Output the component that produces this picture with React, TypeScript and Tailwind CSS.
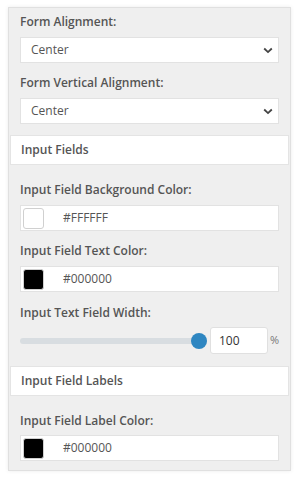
import React from 'react';

const font = { fontFamily: '"Open Sans", "Liberation Sans", sans-serif' };

function Label({ children }: { children: React.ReactNode }) {
  return <div className="text-[12px] leading-[18px] font-semibold text-[#555] mb-[6px]">{children}</div>;
}

function SelectBox({ value }: { value: string }) {
  return (
    <div className="h-[26px] bg-white border border-[#e2e2e2] flex items-center justify-between pl-[10px] pr-[5px]">
      <span className="text-[12px] text-[#555]">{value}</span>
      <svg width="10" height="7" viewBox="0 0 10 7" fill="none">
        <path d="M1.2 1.5l3.8 3.6 3.8-3.6" stroke="#444" strokeWidth="1.8" />
      </svg>
    </div>
  );
}

function ColorField({ color, value }: { color: string; value: string }) {
  return (
    <div className="h-[26px] bg-white border border-[#e2e2e2] flex items-center pl-[2px]">
      <div className="w-[21px] h-[21px] rounded-[3px] border border-[#d0d0d0]" style={{ background: color }} />
      <span className="ml-[19px] text-[12px] text-[#555]">{value}</span>
    </div>
  );
}

function Header({ children }: { children: React.ReactNode }) {
  return (
    <div className="mx-px h-[30px] bg-white border border-[#e4e4e4] flex items-center px-[10px] text-[12px] font-semibold text-[#555]">
      {children}
    </div>
  );
}

export default function App() {
  return (
    <div className="w-[300px] h-[480px] bg-white pt-[7px] pl-[8px]" style={font}>
      <div className="w-[283px] bg-[#efefef] border border-[#e0e0e0] shadow-[0_0_4px_rgba(0,0,0,0.08)]">
        <div className="px-[11px] pt-[5px] pb-[11px]">
          <Label>Form Alignment:</Label>
          <SelectBox value="Center" />
          <div className="h-[11px]" />
          <Label>Form Vertical Alignment:</Label>
          <SelectBox value="Center" />
        </div>
        <Header>Input Fields</Header>
        <div className="px-[11px] pt-[16px] pb-[12px]">
          <Label>Input Field Background Color:</Label>
          <ColorField color="#ffffff" value="#FFFFFF" />
          <div className="h-[11px]" />
          <Label>Input Field Text Color:</Label>
          <ColorField color="#000000" value="#000000" />
          <div className="h-[12px]" />
          <div className="text-[12px] leading-[18px] font-semibold text-[#555] mb-[5px]">Input Text Field Width:</div>
          <div className="flex items-center h-[27px]">
            <div className="relative w-[187px] h-[6px] rounded-full bg-[#d8dde1]">
              <div className="absolute right-0 top-1/2 -translate-y-1/2 w-[16px] h-[16px] rounded-full bg-[#2e86c1]" />
            </div>
            <div className="ml-[3px] w-[58px] h-[27px] bg-white border border-[#e0e0e0] rounded-[3px] flex items-center px-[8px] text-[12px] text-[#333]">
              100
            </div>
            <span className="ml-[2px] text-[11px] text-[#777]">%</span>
          </div>
        </div>
        <Header>Input Field Labels</Header>
        <div className="px-[11px] pt-[16px] pb-[9px]">
          <div className="text-[12px] leading-[18px] font-semibold text-[#555] mb-[5px]">Input Field Label Color:</div>
          <ColorField color="#000000" value="#000000" />
        </div>
      </div>
    </div>
  );
}
